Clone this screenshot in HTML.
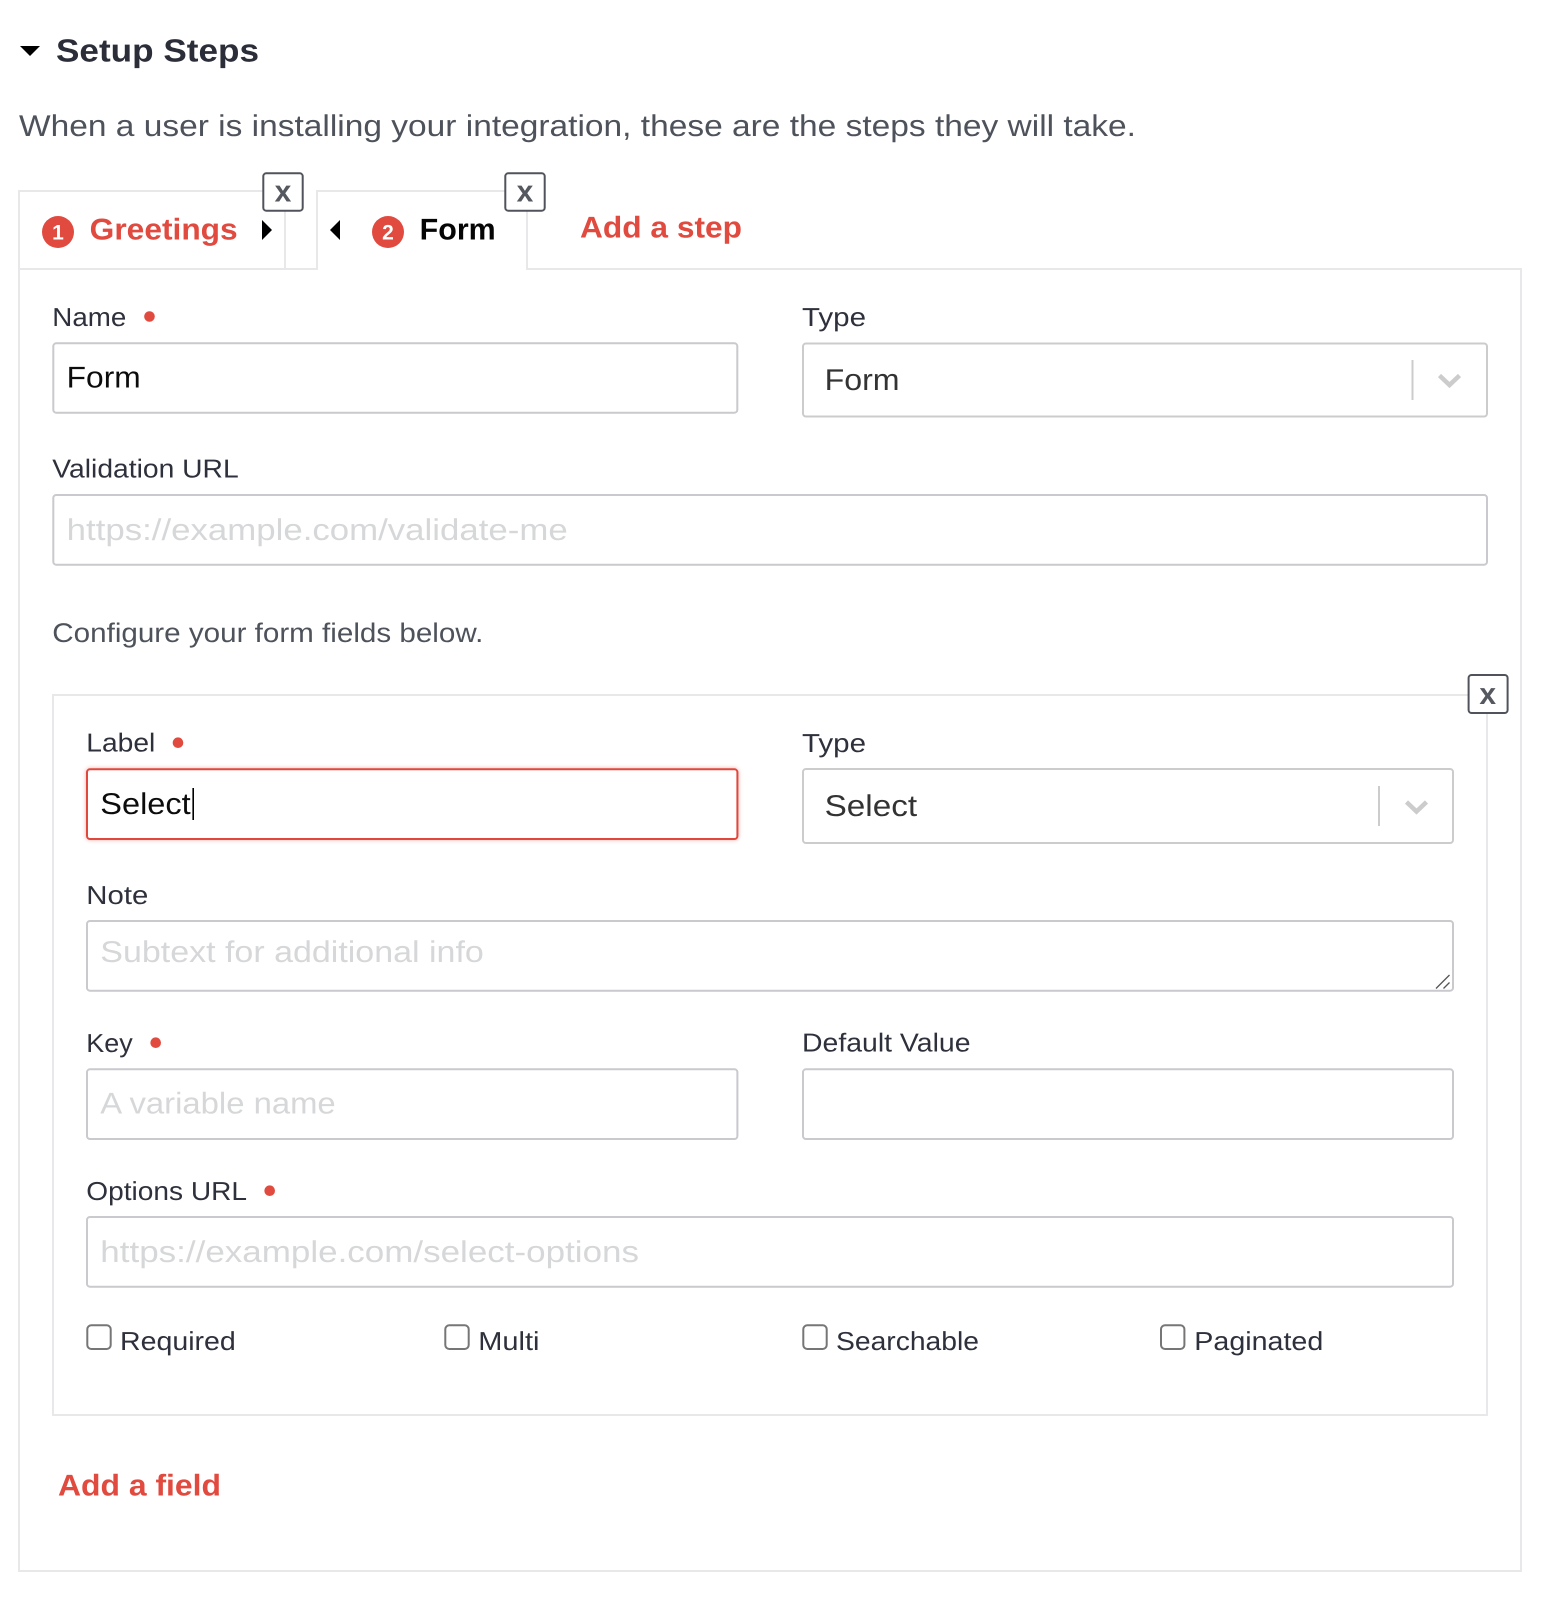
<!DOCTYPE html>
<html lang="en">
<head>
<meta charset="utf-8">
<title>Setup Steps</title>
<style>
html,body{margin:0;padding:0;background:#fff;width:1554px;height:1608px;overflow:hidden}
svg{display:block;position:absolute;left:0;top:0}
text{font-family:"Liberation Sans",Arial,sans-serif;text-rendering:geometricPrecision;white-space:pre}
.h{font-size:32px;font-weight:700;fill:#2b2e39}
.p{font-size:30px;fill:#4e525b}
.l{font-size:26px;fill:#2e313b}
.c{font-size:27px;fill:#4e525b}
.v{font-size:30px;fill:#0c0c0c}
.s{font-size:30px;fill:#333}
.ph{font-size:30px;fill:#d6d7d9}
.r{font-size:30px;font-weight:700;fill:#e14a3f}
.b{font-size:30px;font-weight:700;fill:#050505}
.n{font-size:21px;font-weight:700;fill:#fff;text-anchor:middle}
.x{font-size:30px;font-weight:700;fill:#55585f;text-anchor:middle}
.box{fill:#fff;stroke:#c9c9ce;stroke-width:2}
.sel{fill:#fff;stroke:#cccccc;stroke-width:2}
.xb{fill:#fff;stroke:#50535c;stroke-width:2}
.cb{fill:#fff;stroke:#767676;stroke-width:2}
.bd{fill:#e8e8ea}
.dot{fill:#e14a3f}
.chev{fill:none;stroke:#cccccc;stroke-width:4.5}
</style>
</head>
<body>
<svg width="1554" height="1608" viewBox="0 0 1554 1608" xmlns="http://www.w3.org/2000/svg">
  <!-- heading -->
  <polygon points="20,46 40,46 30,56" fill="#000"/>
  <text class="h" x="56" y="61.3" textLength="203" lengthAdjust="spacingAndGlyphs">Setup Steps</text>
  <text class="p" x="19" y="136" textLength="1117" lengthAdjust="spacingAndGlyphs">When a user is installing your integration, these are the steps they will take.</text>

  <!-- tabs + outer panel borders -->
  <rect class="bd" x="18" y="190" width="2" height="1382"/>
  <rect class="bd" x="18" y="190" width="250" height="2"/>
  <rect class="bd" x="284" y="205" width="2" height="65"/>
  <rect class="bd" x="18" y="268" width="300" height="2"/>
  <rect class="bd" x="316" y="190" width="2" height="80"/>
  <rect class="bd" x="316" y="190" width="195" height="2"/>
  <rect class="bd" x="526" y="205" width="2" height="65"/>
  <rect class="bd" x="526" y="268" width="996" height="2"/>
  <rect class="bd" x="1520" y="268" width="2" height="1304"/>
  <rect class="bd" x="18" y="1570" width="1504" height="2"/>

  <!-- tab 1 -->
  <circle cx="58" cy="232" r="16" fill="#e14a3f"/>
  <text class="n" x="58" y="239.5">1</text>
  <text class="r" x="89.7" y="239.5" textLength="148" lengthAdjust="spacingAndGlyphs">Greetings</text>
  <polygon points="262,220 272,230 262,240" fill="#000"/>
  <rect class="xb" x="263.3" y="173.3" width="39.4" height="37.4" rx="3"/>
  <text class="x" x="283" y="201.5">x</text>

  <!-- tab 2 -->
  <polygon points="340,220 330,230 340,240" fill="#000"/>
  <circle cx="388" cy="232" r="16" fill="#e14a3f"/>
  <text class="n" x="388" y="239.5">2</text>
  <text class="b" x="419.7" y="239.7" textLength="76" lengthAdjust="spacingAndGlyphs">Form</text>
  <rect class="xb" x="505.3" y="173.3" width="39.4" height="37.4" rx="3"/>
  <text class="x" x="525" y="201.5">x</text>

  <text class="r" x="580" y="237.7" textLength="162" lengthAdjust="spacingAndGlyphs">Add a step</text>

  <!-- row 1 -->
  <text class="l" x="52.3" y="326" textLength="74" lengthAdjust="spacingAndGlyphs">Name</text>
  <circle class="dot" cx="149.5" cy="316.5" r="5.3"/>
  <rect class="box" x="53.3" y="343.3" width="684" height="69.4" rx="3"/>
  <text class="v" x="66.7" y="387.7" textLength="74" lengthAdjust="spacingAndGlyphs">Form</text>

  <text class="l" x="802" y="326" textLength="64" lengthAdjust="spacingAndGlyphs">Type</text>
  <rect class="sel" x="803" y="343.5" width="684" height="73" rx="3"/>
  <text class="s" x="824.6" y="390" textLength="75" lengthAdjust="spacingAndGlyphs">Form</text>
  <rect x="1411.5" y="360" width="2" height="40" fill="#ccc"/>
  <path class="chev" d="M1439.5 375.5 L1449.5 385 L1459.5 375.5"/>

  <!-- validation -->
  <text class="l" x="52.3" y="477.7" textLength="186.4" lengthAdjust="spacingAndGlyphs">Validation URL</text>
  <rect class="box" x="53.3" y="495" width="1433.7" height="69.7" rx="3"/>
  <text class="ph" x="66.7" y="540" textLength="501" lengthAdjust="spacingAndGlyphs">https://example.com/validate-me</text>

  <text class="c" x="52.3" y="641.9" textLength="431" lengthAdjust="spacingAndGlyphs">Configure your form fields below.</text>

  <!-- field panel -->
  <rect class="bd" x="52" y="694" width="1420" height="2"/>
  <rect class="bd" x="52" y="694" width="2" height="722"/>
  <rect class="bd" x="1486" y="710" width="2" height="706"/>
  <rect class="bd" x="52" y="1414" width="1436" height="2"/>
  <rect class="xb" x="1468.6" y="675" width="39" height="38" rx="3"/>
  <text class="x" x="1487.7" y="704">x</text>

  <text class="l" x="86.3" y="751.7" textLength="69" lengthAdjust="spacingAndGlyphs">Label</text>
  <circle class="dot" cx="178" cy="742.7" r="5.3"/>
  <rect x="87" y="769.3" width="650.4" height="69.7" rx="3" fill="#fff" stroke="#e1483d" stroke-width="2" style="filter:drop-shadow(0 0 2px rgba(225,72,61,.45))"/>
  <text class="v" x="100.3" y="814" textLength="90.4" lengthAdjust="spacingAndGlyphs">Select</text>
  <rect x="192.4" y="788" width="1.6" height="32" fill="#000"/>

  <text class="l" x="802" y="752" textLength="64" lengthAdjust="spacingAndGlyphs">Type</text>
  <rect class="sel" x="803" y="769" width="650" height="74" rx="3"/>
  <text class="s" x="824.6" y="816" textLength="92.5" lengthAdjust="spacingAndGlyphs">Select</text>
  <rect x="1378" y="786" width="2" height="40" fill="#ccc"/>
  <path class="chev" d="M1406.5 802 L1416.5 811.5 L1426.5 802"/>

  <text class="l" x="86.3" y="904" textLength="62" lengthAdjust="spacingAndGlyphs">Note</text>
  <rect class="box" x="87" y="921" width="1366" height="69.7" rx="3"/>
  <text class="ph" x="100.3" y="961.9" textLength="383.5" lengthAdjust="spacingAndGlyphs">Subtext for additional info</text>
  <path d="M1436 988.5 L1449.5 975 M1443.5 988.5 L1449.5 982.5" stroke="#555" stroke-width="1.3" fill="none"/>

  <text class="l" x="86.3" y="1052" textLength="46.4" lengthAdjust="spacingAndGlyphs">Key</text>
  <circle class="dot" cx="155.7" cy="1042.7" r="5.3"/>
  <rect class="box" x="87" y="1069.3" width="650.4" height="69.7" rx="3"/>
  <text class="ph" x="100.3" y="1113.3" textLength="235.4" lengthAdjust="spacingAndGlyphs">A variable name</text>

  <text class="l" x="802" y="1051.4" textLength="168.5" lengthAdjust="spacingAndGlyphs">Default Value</text>
  <rect class="box" x="803" y="1069.3" width="650" height="69.7" rx="3"/>

  <text class="l" x="86.3" y="1200" textLength="160.7" lengthAdjust="spacingAndGlyphs">Options URL</text>
  <circle class="dot" cx="269.7" cy="1190.7" r="5.3"/>
  <rect class="box" x="87" y="1217" width="1366" height="69.7" rx="3"/>
  <text class="ph" x="100.3" y="1261.9" textLength="538.7" lengthAdjust="spacingAndGlyphs">https://example.com/select-options</text>

  <!-- checkboxes -->
  <rect class="cb" x="87.3" y="1325.3" width="23.4" height="23.7" rx="4"/>
  <text class="l" x="120" y="1350" textLength="115.8" lengthAdjust="spacingAndGlyphs">Required</text>
  <rect class="cb" x="445.3" y="1325.3" width="23.4" height="23.7" rx="4"/>
  <text class="l" x="478.3" y="1350" textLength="61.2" lengthAdjust="spacingAndGlyphs">Multi</text>
  <rect class="cb" x="803.3" y="1325.3" width="23.4" height="23.7" rx="4"/>
  <text class="l" x="836" y="1350" textLength="143" lengthAdjust="spacingAndGlyphs">Searchable</text>
  <rect class="cb" x="1161" y="1325.3" width="23.4" height="23.7" rx="4"/>
  <text class="l" x="1194.3" y="1350" textLength="129" lengthAdjust="spacingAndGlyphs">Paginated</text>

  <text class="r" x="58" y="1495.7" textLength="163" lengthAdjust="spacingAndGlyphs">Add a field</text>
</svg>
</body>
</html>
